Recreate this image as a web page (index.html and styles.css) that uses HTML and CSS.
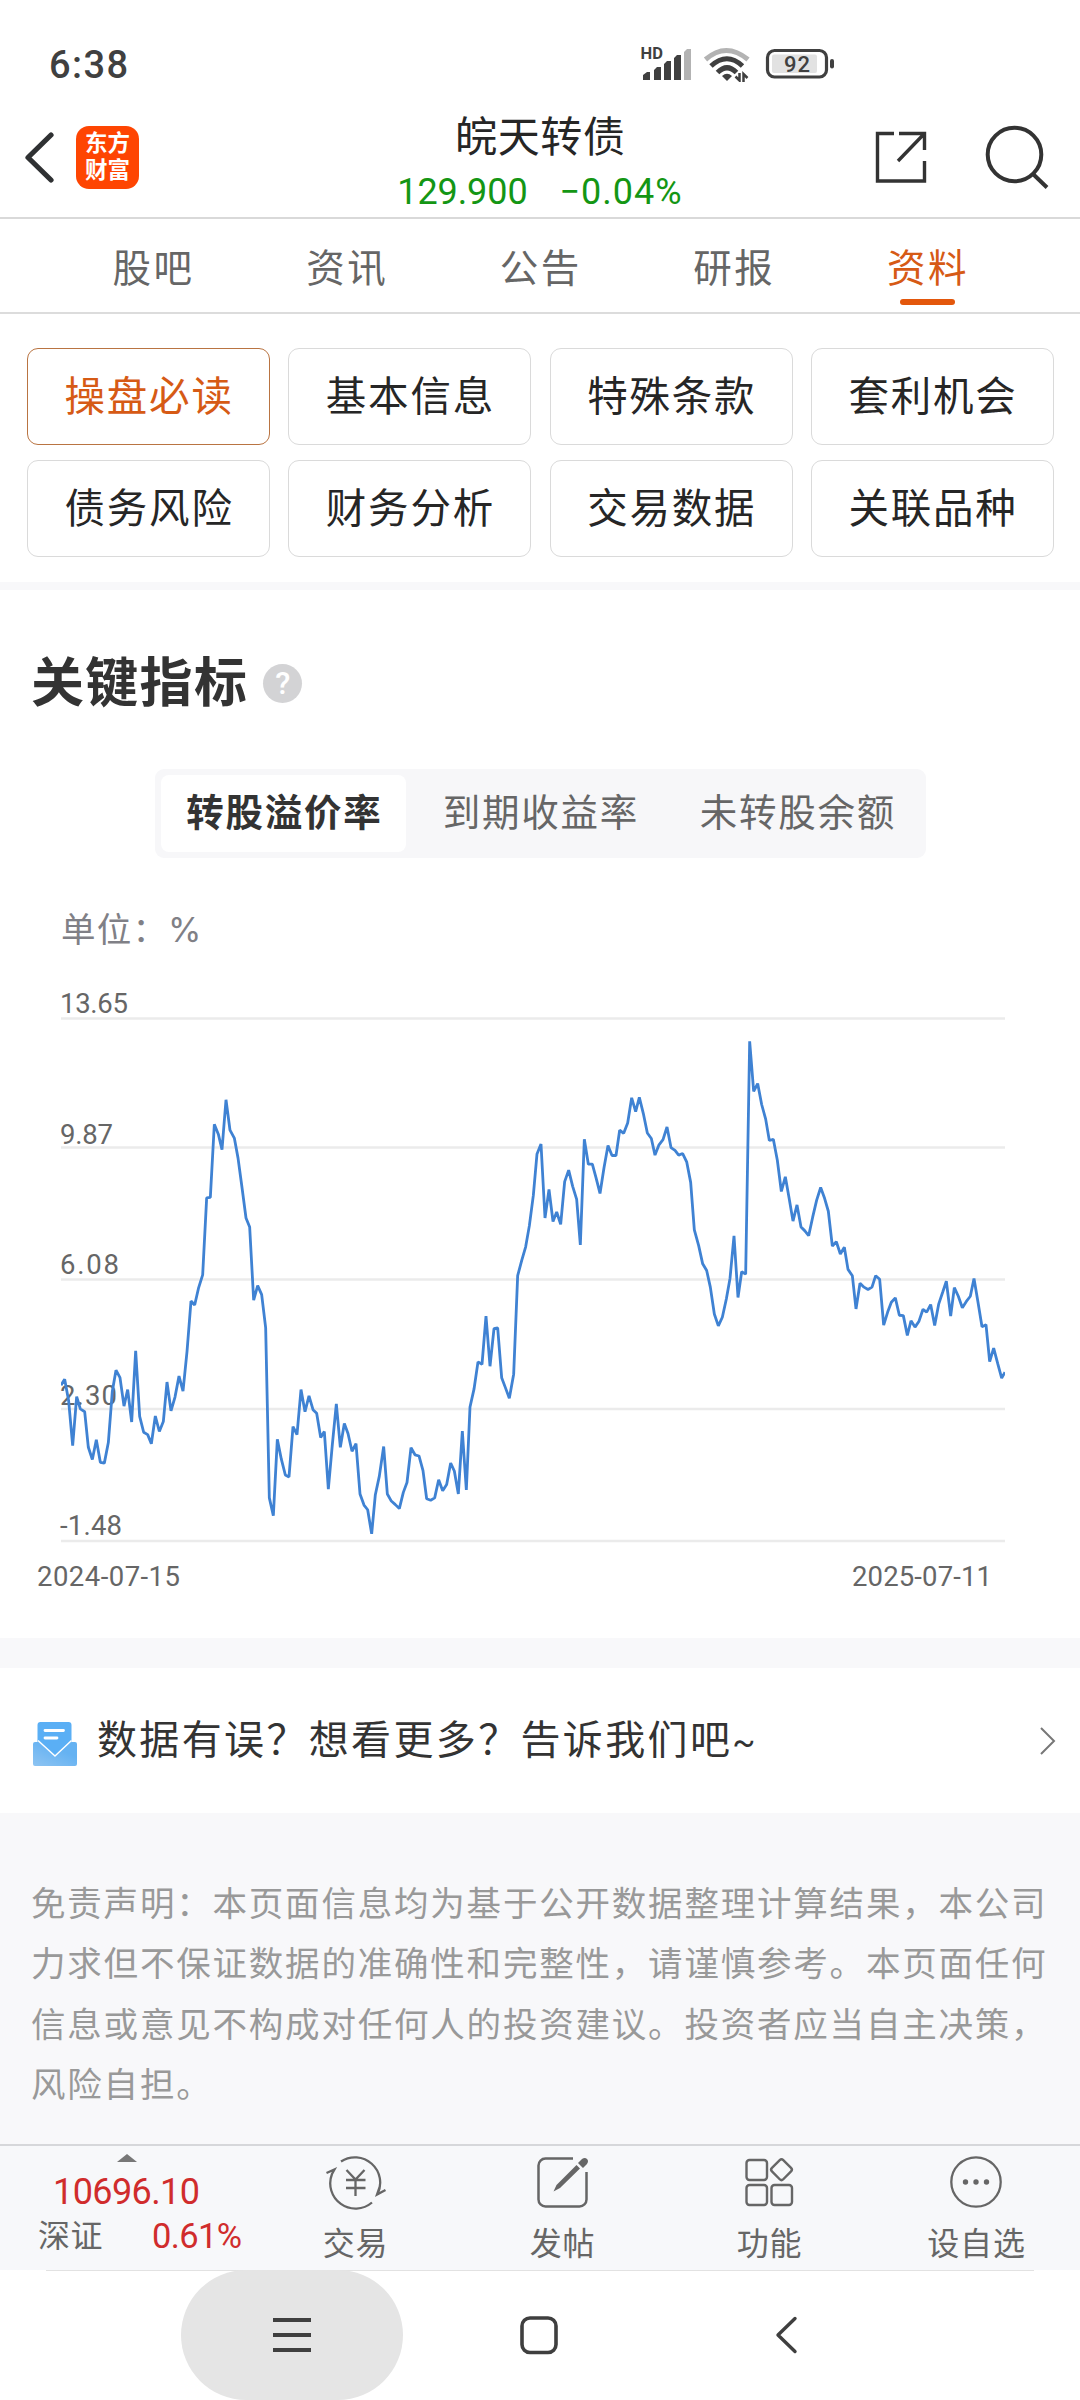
FILE: index.html
```html
<!DOCTYPE html>
<html lang="zh-CN">
<head>
<meta charset="utf-8">
<title>皖天转债</title>
<link rel="stylesheet" href="styles.css">
</head>
<body>
<div class="screen">
  <div class="status">
    <span class="clock">6:38</span>
    <svg class="status-icons" width="200" height="44" viewBox="0 0 200 44">
      <text class="hd" x="0.500" y="21">HD</text>
      <g fill="#404040">
        <path d="M3 42v-5l4-3h3v8zM14 42V32l3-3h4v13zM24 42V26l3-3h4v19zM34 42V20l3-3h4v25z"/>
        <path fill="#b3b3b3" d="M44 42V14l3-3h4v31z"/>
      </g>
      <g fill="none" stroke-width="5">
        <path stroke="#b3b3b3" d="M65.500 21.500Q86 3.500 108 21.500"/>
        <path stroke="#404040" d="M71 28Q87 13.500 102.500 28"/>
        <path stroke="#404040" d="M77.500 34.500Q87 25 96.500 34.500"/>
      </g>
      <path fill="#404040" d="M82 38q5-4.500 10 0l-5 5z"/>
      <path fill="none" stroke="#404040" stroke-width="2.500" d="M95.500 38.500l4 4V35M103.500 44v-8l4 4"/>
      <rect x="127.500" y="12.500" width="59" height="26.500" rx="7" fill="#fff" stroke="#404040" stroke-width="3.200"/>
      <rect x="132" y="16.500" width="45" height="18.500" rx="2" fill="#e2e2e2"/>
      <rect x="190" y="21" width="4" height="9.500" rx="2" fill="#404040"/>
      <text class="batt" x="144" y="34" textLength="26">92</text>
    </svg>
  </div>

  <header class="header">
    <div class="side">
      <svg width="34" height="56" viewBox="0 0 34 56"><path d="M31 6L8 28.500l23 22.500" fill="none" stroke="#2f3133" stroke-width="5.200" stroke-linecap="round" stroke-linejoin="round"/></svg>
      <div class="logo">东方<br>财富</div>
    </div>
    <div class="quote">
      <div class="name">皖天转债</div>
      <div class="price"><span class="last">129.900</span><span class="chg">−0.04%</span></div>
    </div>
    <div class="side right">
      <svg width="56" height="56" viewBox="0 0 56 56" fill="none" stroke="#333" stroke-width="3.400">
        <path d="M21 4.500H4.500v47.500h47V32"/><path d="M26 4.500h25.500V21M51 5L25 32"/>
      </svg>
      <svg width="66" height="66" viewBox="0 0 66 66" fill="none" stroke="#333" stroke-width="4">
        <circle cx="30.500" cy="30.500" r="26.800"/><path d="M49 50l14 13.500"/>
      </svg>
    </div>
  </header>

  <nav class="tabs">
    <span>股吧</span><span>资讯</span><span>公告</span><span>研报</span><span class="on">资料</span>
  </nav>

  <div class="chips">
    <span class="on">操盘必读</span><span>基本信息</span><span>特殊条款</span><span>套利机会</span>
    <span>债务风险</span><span>财务分析</span><span>交易数据</span><span>关联品种</span>
  </div>

  <section class="metrics">
    <h2>关键指标 <i class="help">?</i></h2>
    <div class="segment"><span class="on">转股溢价率</span><span>到期收益率</span><span>未转股余额</span></div>
    <div class="unit">单位：<span class="pct">%</span></div>
    <svg class="chart" width="1080" height="660" viewBox="0 980 1080 660">
      <g stroke="#ebebeb" stroke-width="2.500">
        <path d="M61 1018.500H1005M61 1147.500H1005M61 1279.500H1005M61 1409H1005M61 1541H1005"/>
      </g>
      <g class="axis">
        <text x="60" y="1012.500" textLength="68">13.65</text>
        <text x="60" y="1143.500" textLength="53">9.87</text>
        <text x="60" y="1274" textLength="59">6.08</text>
        <text x="60" y="1405" textLength="57">2.30</text>
        <text x="60" y="1535" textLength="62">-1.48</text>
        <text x="37" y="1585.500" textLength="143">2024-07-15</text>
        <text x="852" y="1585.500" textLength="140">2025-07-11</text>
      </g>
      <svg x="61" y="1018.700" width="944" height="522.300" viewBox="63 98 2832 1321" preserveAspectRatio="none">
        <polyline fill="none" stroke="#3f82d3" stroke-width="2.800" vector-effect="non-scaling-stroke" stroke-linejoin="bevel" points="63,1025 74,1010 86,1065 98,1178 110,1054 121,1085 134,1092 145,1182 157,1213 169,1163 181,1220 193,1222 205,1170 217,1040 228,987 240,1006 252,1078 263,1036 275,1118 287,938 299,1104 311,1144 323,1150 334,1173 346,1103 358,1142 370,1117 381,1017 393,1090 405,1055 417,1002 429,1040 441,940 453,812 464,822 476,778 488,746 500,551 511,550 523,365 535,390 546,429 558,303 570,380 583,400 594,450 606,525 618,602 629,625 641,810 653,773 665,796 677,880 688,1310 700,1355 712,1162 724,1212 736,1252 747,1257 759,1130 771,1150 783,1036 795,1092 807,1052 819,1087 830,1096 842,1157 853,1142 865,1288 877,1175 889,1072 901,1182 913,1122 924,1147 936,1192 948,1173 960,1300 972,1328 983,1340 995,1401 1006,1302 1018,1255 1031,1180 1042,1300 1054,1318 1066,1327 1078,1337 1090,1296 1101,1271 1113,1183 1125,1201 1137,1204 1149,1241 1160,1312 1172,1316 1184,1310 1196,1264 1208,1292 1220,1276 1232,1222 1243,1242 1255,1300 1267,1141 1279,1290 1290,1080 1302,1035 1314,966 1326,972 1338,850 1350,977 1362,882 1373,880 1385,1006 1397,1033 1408,1058 1421,997 1433,748 1445,710 1457,675 1468,622 1480,545 1491,440 1503,415 1515,602 1527,530 1539,611 1550,587 1562,618 1574,510 1586,481 1598,522 1610,555 1621,670 1633,403 1645,466 1657,466 1668,500 1680,540 1692,475 1704,419 1716,444 1728,444 1739,380 1751,388 1763,362 1775,298 1787,333 1798,297 1810,338 1822,387 1834,401 1845,443 1857,417 1869,404 1881,372 1893,424 1905,431 1916,443 1928,439 1940,460 1952,512 1963,632 1976,672 1988,718 2000,735 2011,777 2023,845 2035,875 2047,853 2059,807 2070,755 2082,647 2094,803 2105,738 2117,744 2129,155 2141,282 2153,262 2165,315 2177,352 2188,406 2200,403 2212,456 2224,535 2236,498 2247,550 2259,610 2271,569 2283,625 2294,634 2306,647 2318,600 2330,557 2342,525 2354,553 2365,585 2377,673 2389,662 2401,693 2413,676 2424,732 2437,748 2448,832 2460,767 2472,777 2484,783 2496,777 2507,748 2519,757 2531,873 2543,840 2554,815 2566,804 2578,848 2590,849 2602,899 2613,862 2625,878 2637,863 2649,833 2660,840 2672,821 2684,874 2696,820 2708,790 2719,762 2732,850 2743,778 2755,800 2767,829 2779,813 2791,800 2802,755 2814,815 2826,877 2838,872 2849,965 2861,931 2873,970 2885,1007 2895,992"/>
      </svg>
    </svg>
  </section>

  <div class="feedback">
    <svg width="44" height="44" viewBox="0 0 44 44">
      <defs><linearGradient id="env" x1="0" y1="1" x2="0.600" y2="0.300"><stop offset="0" stop-color="#8ec4f2"/><stop offset="1" stop-color="#65b2f2"/></linearGradient></defs>
      <path fill="#5aaff5" d="M7.500 0h28a3 3 0 013 3v18L22 36 4.500 20V3a3 3 0 013-3z"/>
      <path fill="url(#env)" d="M2 20h3l17 15 16.500-15H42a2 2 0 012 2v20a2 2 0 01-2 2H2a2 2 0 01-2-2V22a2 2 0 012-2z"/>
      <path d="M5 18.500l17 15.500 16.500-15.500" fill="none" stroke="#fff" stroke-width="1.500"/>
      <path d="M12 8.500h18.500M12 16h12" stroke="#fff" stroke-width="2.800" stroke-linecap="round"/>
    </svg>
    <span class="ask">数据有误？想看更多？告诉我们吧<span class="tilde">~</span></span>
    <svg width="18" height="30" viewBox="0 0 18 30"><path d="M2 2l13 13L2 28" fill="none" stroke="#777" stroke-width="2"/></svg>
  </div>

  <p class="disclaimer">免责声明：本页面信息均为基于公开数据整理计算结果，本公司<br>力求但不保证数据的准确性和完整性，请谨慎参考。本页面任何<br>信息或意见不构成对任何人的投资建议。投资者应当自主决策，<br>风险自担。</p>

  <footer class="bar">
    <div class="index">
      <svg width="20" height="8" viewBox="0 0 20 8"><path d="M10 0l10 8H0z" fill="#777"/></svg>
      <div class="points">10696.10</div>
      <div class="row"><span>深证</span><b>0.61%</b></div>
    </div>
    <div class="item">
      <svg width="64" height="56" viewBox="0 0 64 56" fill="none" stroke="#666" stroke-width="2.300">
        <path d="M17 7.500A25.300 25.300 0 0153.500 40M61.500 36L53 40.500 56 32M48 48.500A25.300 25.300 0 018 20L10.500 15.500 2.500 19"/>
        <path d="M22.500 16l9 9.500 9-9.500M22 26h19.500M22 34h19.500M31.500 25v17"/>
      </svg>
      <span>交易</span>
    </div>
    <div class="item">
      <svg width="56" height="56" viewBox="0 0 56 56" fill="none" stroke="#666" stroke-width="2.500">
        <path d="M38 4.500H10.500a7 7 0 00-7 7v34a7 7 0 007 7h34a7 7 0 007-7V18"/>
        <path fill="#666" stroke="none" d="M41.500 11l3.500 3.500L25 34l-6.500 3.500L21.500 31zM43 9l4-4q3-2 5 0t0 5l-4 4z"/>
      </svg>
      <span>发帖</span>
    </div>
    <div class="item">
      <svg width="56" height="56" viewBox="0 0 56 56" fill="none" stroke="#666" stroke-width="2.400">
        <rect x="4.500" y="6" width="20.500" height="20" rx="3"/><rect x="4.500" y="31" width="20.500" height="20" rx="3"/><rect x="29.500" y="31" width="20.500" height="20" rx="3"/>
        <rect x="31.500" y="7.700" width="16" height="16" rx="2.500" transform="rotate(45 39.500 15.700)"/>
      </svg>
      <span>功能</span>
    </div>
    <div class="item">
      <svg width="56" height="56" viewBox="0 0 56 56">
        <circle cx="27" cy="28" r="24.700" fill="none" stroke="#666" stroke-width="2.300"/>
        <g fill="#666"><circle cx="16.500" cy="28" r="2.700"/><circle cx="27" cy="28" r="2.700"/><circle cx="37.500" cy="28" r="2.700"/></g>
      </svg>
      <span>设自选</span>
    </div>
  </footer>

  <div class="sysnav">
    <div class="key pressed"><svg width="38" height="36" viewBox="0 0 38 36" stroke="#3f3f3f" stroke-width="4"><path d="M0 3h38M0 18h38M0 33h38"/></svg></div>
    <div class="key"><svg width="40" height="40" viewBox="0 0 40 40"><rect x="3" y="3" width="34" height="34.500" rx="8" fill="none" stroke="#3f3f3f" stroke-width="3.600"/></svg></div>
    <div class="key"><svg width="24" height="40" viewBox="0 0 24 40"><path d="M21 3.500L4 20l17 16.500" fill="none" stroke="#3f3f3f" stroke-width="3.400" stroke-linecap="round" stroke-linejoin="round"/></svg></div>
  </div>
</div>
</body>
</html>
```
FILE: styles.css
```css
* { box-sizing: border-box; }
body {
  margin: 0;
  background: #fff;
  color: #262626;
  font-family: Roboto, "Noto Sans CJK SC", sans-serif;
}
svg { display: block; flex: none; }
.screen {
  width: 1080px;
  height: 2400px;
  display: flex;
  flex-direction: column;
  overflow: hidden;
  background: #fff;
}
.screen > * { flex: none; }

/* status bar */
.status {
  height: 105px;
  padding: 37px 0 0 49px;
  display: flex;
  align-items: flex-start;
}
.clock {
  width: 591px;
  font-size: 38px;
  line-height: 57px;
  font-weight: 500;
  letter-spacing: 1.400px;
  color: #404040;
}
.status-icons { margin-top: 1px; }
.hd { font-size: 16.500px; font-weight: 700; fill: #404040; }
.batt { font-size: 22px; font-weight: 500; fill: #404040; }

/* title bar */
.header {
  height: 114px;
  border-bottom: 2px solid #d9d9d9;
  display: grid;
  grid-template-columns: 208px 1fr 208px;
}
.side { display: flex; padding: 24px 0 0 20px; }
.logo {
  width: 63px;
  height: 63px;
  margin: -3px 0 0 22px;
  padding-top: 4px;
  border-radius: 13px;
  background: #fe4502;
  color: #fff;
  font-size: 22.500px;
  font-weight: 700;
  line-height: 27px;
  text-align: center;
}
.right { padding: 24px 0 0 1px; gap: 55px; }
.right > svg:last-child { margin-top: -5px; }
.quote { text-align: center; padding-top: 2px; }
.name { font-size: 42px; line-height: 62px; letter-spacing: .7px; text-indent: .7px; }
.price {
  display: flex;
  justify-content: center;
  gap: 32px;
  font-size: 36px;
  line-height: 46px;
  color: #149614;
  letter-spacing: -.1px;
}
.chg { letter-spacing: 1px; }

/* page tabs */
.tabs {
  height: 95px;
  padding: 0 56px;
  border-bottom: 2px solid #dcdcdc;
  display: grid;
  grid-template-columns: repeat(5, 1fr);
  font-size: 38.500px;
  letter-spacing: 2.500px;
  text-indent: 1.500px;
  line-height: 99px;
  text-align: center;
  color: #666;
}
.tabs span { height: 93px; }
.tabs .on { color: #d65a15; position: relative; }
.tabs .on::after {
  content: "";
  position: absolute;
  left: 50%;
  bottom: 7px;
  width: 55px;
  height: 6px;
  margin-left: -27px;
  border-radius: 3px;
  background: #e3570c;
}

/* section chips */
.chips {
  padding: 34px 26px 25px 27px;
  border-bottom: 8px solid #f8f8fa;
  display: grid;
  grid-template-columns: repeat(4, 243px);
  justify-content: space-between;
  row-gap: 15px;
}
.chips span {
  height: 97px;
  border: 1.500px solid #dadada;
  border-radius: 11px;
  font-size: 40.500px;
  letter-spacing: 1.800px;
  text-indent: 1.200px;
  line-height: 97px;
  text-align: center;
}
.chips .on { color: #d65a15; border-color: #b97442; }

/* key metrics */
.metrics { height: 1048px; }
h2 {
  margin: 0;
  padding: 54px 0 0 31px;
  height: 179px;
  display: flex;
  font-size: 53px;
  line-height: 80px;
  font-weight: 700;
  letter-spacing: 1.300px;
  color: #333;
}
.help {
  width: 39px;
  height: 39px;
  margin: 20px 0 0 15px;
  border-radius: 50%;
  background: #d3d3d5;
  color: #fff;
  font: 500 31px/40px Roboto, sans-serif;
  letter-spacing: 0;
  text-align: center;
}
.segment {
  width: 771px;
  height: 89px;
  margin: 0 auto 0 155px;
  padding: 6px;
  border-radius: 9px;
  background: #f7f7f9;
  display: grid;
  grid-template-columns: 245px 268px 246px;
  font-size: 37.500px;
  line-height: 77px;
  letter-spacing: 1.800px;
  text-indent: 1.800px;
  text-align: center;
  color: #666;
}
.segment .on { background: #fff; border-radius: 8px; font-weight: 700; color: #333; }
.unit {
  height: 122px;
  padding: 47px 0 0 61px;
  font-size: 34.500px;
  line-height: 50px;
  letter-spacing: 1.200px;
  color: #808086;
}
.pct { font-family: Inter, sans-serif; font-size: 34px; }
.axis { font-size: 27.500px; fill: #666; }

/* feedback row */
.feedback {
  box-sizing: content-box;
  height: 145px;
  border-top: 30px solid #f8f8fa;
  padding: 0 23px 0 33px;
  display: flex;
  align-items: center;
}
.feedback > svg:first-child { margin-top: 6px; }
.ask {
  flex: 1;
  margin: 1px 0 0 20px;
  font-size: 40px;
  line-height: 60px;
  letter-spacing: 2.350px;
  color: #333;
}
.tilde { font-size: 34px; }

/* disclaimer */
.disclaimer {
  margin: 0;
  padding: 61px 0 0 31px;
  background: #f8f8fa;
  color: #999;
  font-size: 34.500px;
  line-height: 60.400px;
  letter-spacing: 1.800px;
  white-space: nowrap;
}
.screen > .disclaimer { flex: 1 1 0; }

/* bottom toolbar */
.bar {
  height: 126px;
  border-top: 2px solid #d6d7da;
  background: #f7f8fa;
  display: grid;
  grid-template-columns: 252px repeat(4, 207px);
  color: #666;
}
.index { padding-top: 8px; }
.index > svg { margin-left: 117px; }
.points { margin: 9px 0 0 53px; font-size: 36px; line-height: 42px; letter-spacing: -.6px; color: #d02c2c; }
.row {
  display: flex;
  padding-left: 38px;
  font-size: 32px;
  line-height: 47px;
}
.row span { width: 114px; letter-spacing: .6px; }
.row b { font-weight: 400; font-size: 34.500px; letter-spacing: -.6px; color: #d02c2c; }
.item { display: flex; flex-direction: column; align-items: center; padding-top: 8px; }
.item span { margin-top: 11px; font-size: 32px; line-height: 46px; letter-spacing: .8px; }

/* system navigation */
.sysnav {
  height: 130px;
  display: grid;
  grid-template-columns: 222px 222px 222px;
  justify-content: start;
  column-gap: 25px;
  padding-left: 181px;
  background: linear-gradient(#e2e2e2, #e2e2e2) 46px 0 / 988px 1px no-repeat #fff;
}
.key { display: flex; align-items: center; justify-content: center; }
.pressed { background: #e5e5e5; border-radius: 65px; }
```
